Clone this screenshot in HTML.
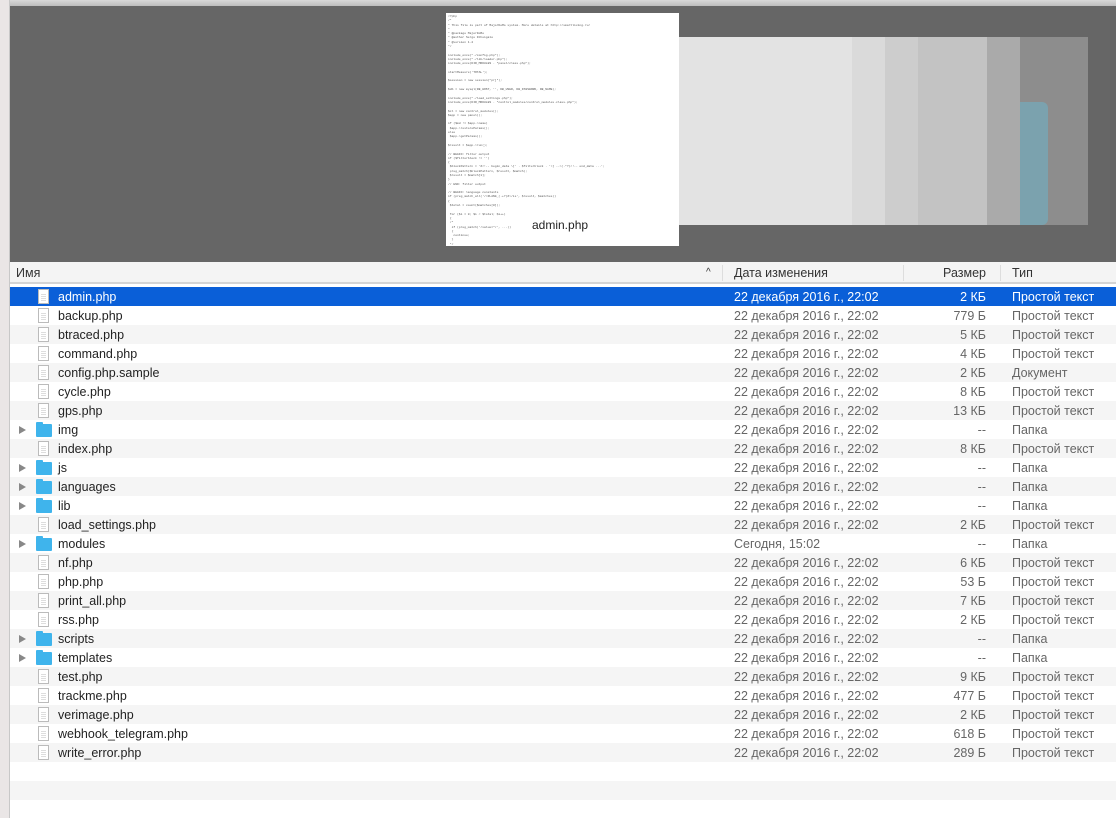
<!DOCTYPE html>
<html><head><meta charset="utf-8"><style>
*{margin:0;padding:0;box-sizing:border-box}
body{width:1119px;height:818px;overflow:hidden;background:#fff;font-family:"Liberation Sans",sans-serif;font-size:12.5px;position:relative}
.lstrip{position:absolute;left:0;top:0;width:10px;height:818px;background:#eae6e6;border-right:1px solid #c8c8c8}
.top{position:absolute;left:0;top:0;width:1119px;height:6px;background:linear-gradient(#d8d8d8,#bdbdbd)}
.dark{position:absolute;left:10px;top:6px;width:1106px;height:256px;background:#666}
.rstrip{position:absolute;left:1116px;top:0;width:3px;height:818px;background:#fff}
.hdr{position:absolute;left:10px;top:262px;width:1106px;height:22px;background:#f4f4f4;border-bottom:2px solid #d4d4d4;color:#333}
.hdr span{position:absolute;top:4px}
.sep{position:absolute;top:3px;width:1px;height:16px;background:#ddd}
.row{position:absolute;left:10px;width:1106px;height:19px;color:#222}
.g{background:#f5f5f5}
.sel{background:#0a5fd8;color:#fff}
.row .n{position:absolute;left:48px;top:3px}
.row .d{position:absolute;left:724px;top:3px;color:#666}
.row .s{position:absolute;right:130px;top:3px;color:#666}
.row .t{position:absolute;left:1002px;top:3px;color:#666}
.sel .d,.sel .s,.sel .t{color:#fff}
.fi{position:absolute;left:28px;top:2px;width:11px;height:15px;background:#fff;border:1px solid #bbb}
.fi:after{content:"";position:absolute;left:2px;top:4px;width:5px;height:7px;background:repeating-linear-gradient(#ddd 0 1px,transparent 1px 2px)}
.fo{position:absolute;left:26px;top:4px;width:16px;height:13px;background:#3fb4ec;border-radius:1px}
.fo:before{content:"";position:absolute;left:0;top:-2px;width:7px;height:3px;background:#3fb4ec;border-radius:1px 1px 0 0}
.tri{position:absolute;left:9px;top:6px;width:0;height:0;border-left:7px solid #888;border-top:4px solid transparent;border-bottom:4px solid transparent}
.b{position:absolute;top:31px;height:188px}
</style></head><body>
<div class="top"></div>
<div class="dark">
 <div class="b" style="left:669px;width:173px;background:#e3e3e3"></div>
 <div class="b" style="left:842px;width:33px;background:#dadada"></div>
 <div class="b" style="left:875px;width:33px;background:#cdcdcd"></div>
 <div class="b" style="left:908px;width:69px;background:#c3c3c3"></div>
 <div class="b" style="left:977px;width:33px;background:#aaa"></div>
 <div class="b" style="left:1010px;width:68px;background:#8d8d8d"></div>
 <div style="position:absolute;left:1010px;top:96px;width:28px;height:123px;background:#7ba2ae;border-radius:0 6px 6px 0"></div>
 <div style="position:absolute;left:436px;top:7px;width:233px;height:233px;background:#fff;overflow:hidden;font-family:'Liberation Mono',monospace;font-size:3px;line-height:4.3px;color:#555;padding:2px">
 &lt;?php<br>/*<br>* This file is part of MajorDoMo system. More details at http://smartliving.ru/<br>*<br>* @package MajorDoMo<br>* @author Serge Dzheigalo<br>* @version 1.2<br>*/<br><br>include_once("./config.php");<br>include_once("./lib/loader.php");<br>include_once(DIR_MODULES . "panel/class.php");<br><br>startMeasure('TOTAL');<br><br>$session = new session("prj");<br><br>$db = new mysql(DB_HOST, '', DB_USER, DB_PASSWORD, DB_NAME);<br><br>include_once("./load_settings.php");<br>include_once(DIR_MODULES . "control_modules/control_modules.class.php");<br><br>$cl = new control_modules();<br>$app = new panel();<br><br>if ($md != $app-&gt;name)<br>&nbsp;$app-&gt;restoreParams();<br>else<br>&nbsp;$app-&gt;getParams();<br><br>$result = $app-&gt;run();<br><br>// BEGIN: filter output<br>if ($filterblock != '')<br>{<br>&nbsp;$blockPattern = '#&lt;!-- begin_data \[' . $filterblock . '\] --&gt;(.*?)&lt;!-- end_data ...';<br>&nbsp;preg_match($blockPattern, $result, $match);<br>&nbsp;$result = $match[1];<br>}<br>// END: filter output<br><br>// BEGIN: language constants<br>if (preg_match_all('/&lt;#LANG_(.+?)#&gt;/is', $result, $matches))<br>{<br>&nbsp;$total = count($matches[0]);<br><br>&nbsp;for ($i = 0; $i &lt; $total; $i++)<br>&nbsp;{<br>&nbsp;/*<br>&nbsp;&nbsp;if (preg_match('/value="/', ...))<br>&nbsp;&nbsp;{<br>&nbsp;&nbsp;&nbsp;continue;<br>&nbsp;&nbsp;}<br>&nbsp;*/<br><br>&nbsp;&nbsp;if (defined('LANG_' . $matches[1][$i]))<br>&nbsp;&nbsp;{<br>&nbsp;&nbsp;&nbsp;$result = str_replace($matches[0][$i], ...);<br>&nbsp;&nbsp;}<br>&nbsp;&nbsp;else<br>
 <div style="position:absolute;left:84px;top:210px;font-family:'Liberation Sans',sans-serif;font-size:12px;color:#222;background:#fff;padding:0 2px">admin.php</div>
 </div>
</div>
<div class="hdr">
 <span style="left:6px">Имя</span>
 <span style="left:696px;font-size:10px;top:5px">^</span>
 <div class="sep" style="left:712px"></div>
 <span style="left:724px">Дата изменения</span>
 <div class="sep" style="left:893px"></div>
 <span style="right:130px">Размер</span>
 <div class="sep" style="left:990px"></div>
 <span style="left:1002px">Тип</span>
</div>
<div class="lstrip"></div>
<div class="rstrip"></div>
<div id="rows"></div>
<script>
var D="22 декабря 2016 г., 22:02",P="Простой текст",F="Папка";
var r=[["admin.php",D,"2 КБ",P,0],["backup.php",D,"779 Б",P,0],["btraced.php",D,"5 КБ",P,0],["command.php",D,"4 КБ",P,0],["config.php.sample",D,"2 КБ","Документ",0],["cycle.php",D,"8 КБ",P,0],["gps.php",D,"13 КБ",P,0],["img",D,"--",F,1],["index.php",D,"8 КБ",P,0],["js",D,"--",F,1],["languages",D,"--",F,1],["lib",D,"--",F,1],["load_settings.php",D,"2 КБ",P,0],["modules","Сегодня, 15:02","--",F,1],["nf.php",D,"6 КБ",P,0],["php.php",D,"53 Б",P,0],["print_all.php",D,"7 КБ",P,0],["rss.php",D,"2 КБ",P,0],["scripts",D,"--",F,1],["templates",D,"--",F,1],["test.php",D,"9 КБ",P,0],["trackme.php",D,"477 Б",P,0],["verimage.php",D,"2 КБ",P,0],["webhook_telegram.php",D,"618 Б",P,0],["write_error.php",D,"289 Б",P,0],["","","","",2],["","","","",2],["","","","",2]];
var h="";
r.forEach(function(x,i){var c=i==0?"row sel":(i%2==0?"row g":"row");
var ic=x[4]==1?'<div class="tri"></div><div class="fo"></div>':(x[4]==0?'<div class="fi"></div>':'');
h+='<div class="'+c+'" style="top:'+(287+i*19)+'px">'+ic+'<span class="n">'+x[0]+'</span><span class="d">'+x[1]+'</span><span class="s">'+x[2]+'</span><span class="t">'+x[3]+'</span></div>';});
document.getElementById("rows").innerHTML=h;
</script>
</body></html>
